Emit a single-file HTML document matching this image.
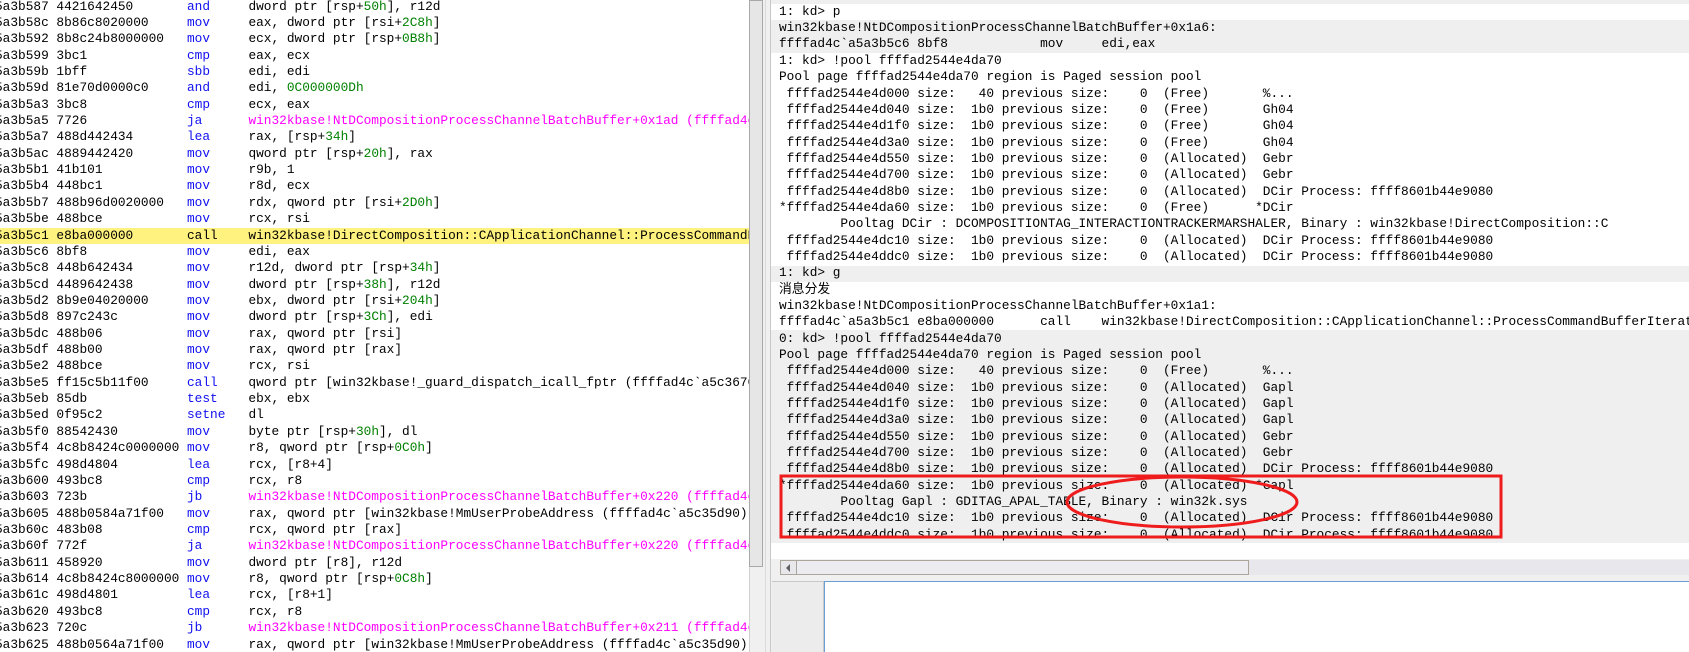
<!DOCTYPE html>
<html><head><meta charset="utf-8"><style>
*{margin:0;padding:0}
body{width:1689px;height:652px;overflow:hidden;background:#f0f0f0;position:relative;font-family:"Liberation Mono","Noto Sans CJK SC",monospace;font-size:12.8px;color:#000}
pre{font-family:"Liberation Mono","Noto Sans CJK SC",monospace;font-size:12.8px;position:absolute;white-space:pre}
#left{position:absolute;left:0;top:0;width:749px;height:652px;background:#fff;overflow:hidden}
#left pre{left:-5px;top:-1.5px;line-height:16.36px}
.b{color:#1010f0}.g{color:#008000}.m{color:#ff00ff}
#hl{position:absolute;left:0;top:228px;width:749px;height:16px;background:#fff27f}
#vs{position:absolute;left:749px;top:0;width:14px;height:652px;background:#f0f0f0;border-left:1px solid #d0d0d0}
#thumb{position:absolute;left:750px;top:0;width:12px;height:567px;background:#e6e6e6;border:1px solid #a8a8a8;box-sizing:border-box;width:14px;left:749px}
#right{position:absolute;left:771px;top:0;width:918px;height:543px;background:#fff;overflow:hidden}
#right pre{left:8px;top:3.8px;line-height:16.34px}
.gr{position:absolute;left:0;width:918px;background:#efefef}
</style></head><body>
<div id="left">
<div id="hl"></div>
<pre>5a3b587 4421642450       <span class="b">and</span>     dword ptr [rsp+<span class="g">50h</span>], r12d
5a3b58c 8b86c8020000     <span class="b">mov</span>     eax, dword ptr [rsi+<span class="g">2C8h</span>]
5a3b592 8b8c24b8000000   <span class="b">mov</span>     ecx, dword ptr [rsp+<span class="g">0B8h</span>]
5a3b599 3bc1             <span class="b">cmp</span>     eax, ecx
5a3b59b 1bff             <span class="b">sbb</span>     edi, edi
5a3b59d 81e70d0000c0     <span class="b">and</span>     edi, <span class="g">0C000000Dh</span>
5a3b5a3 3bc8             <span class="b">cmp</span>     ecx, eax
5a3b5a5 7726             <span class="b">ja</span>      <span class="m">win32kbase!NtDCompositionProcessChannelBatchBuffer+0x1ad (ffffad4c`a5a3b5ad)</span>
5a3b5a7 488d442434       <span class="b">lea</span>     rax, [rsp+<span class="g">34h</span>]
5a3b5ac 4889442420       <span class="b">mov</span>     qword ptr [rsp+<span class="g">20h</span>], rax
5a3b5b1 41b101           <span class="b">mov</span>     r9b, 1
5a3b5b4 448bc1           <span class="b">mov</span>     r8d, ecx
5a3b5b7 488b96d0020000   <span class="b">mov</span>     rdx, qword ptr [rsi+<span class="g">2D0h</span>]
5a3b5be 488bce           <span class="b">mov</span>     rcx, rsi
5a3b5c1 e8ba000000       call    win32kbase!DirectComposition::CApplicationChannel::ProcessCommandBufferIterator
5a3b5c6 8bf8             <span class="b">mov</span>     edi, eax
5a3b5c8 448b642434       <span class="b">mov</span>     r12d, dword ptr [rsp+<span class="g">34h</span>]
5a3b5cd 4489642438       <span class="b">mov</span>     dword ptr [rsp+<span class="g">38h</span>], r12d
5a3b5d2 8b9e04020000     <span class="b">mov</span>     ebx, dword ptr [rsi+<span class="g">204h</span>]
5a3b5d8 897c243c         <span class="b">mov</span>     dword ptr [rsp+<span class="g">3Ch</span>], edi
5a3b5dc 488b06           <span class="b">mov</span>     rax, qword ptr [rsi]
5a3b5df 488b00           <span class="b">mov</span>     rax, qword ptr [rax]
5a3b5e2 488bce           <span class="b">mov</span>     rcx, rsi
5a3b5e5 ff15c5b11f00     <span class="b">call</span>    qword ptr [win32kbase!_guard_dispatch_icall_fptr (ffffad4c`a5c36708)]
5a3b5eb 85db             <span class="b">test</span>    ebx, ebx
5a3b5ed 0f95c2           <span class="b">setne</span>   dl
5a3b5f0 88542430         <span class="b">mov</span>     byte ptr [rsp+<span class="g">30h</span>], dl
5a3b5f4 4c8b8424c0000000 <span class="b">mov</span>     r8, qword ptr [rsp+<span class="g">0C0h</span>]
5a3b5fc 498d4804         <span class="b">lea</span>     rcx, [r8+4]
5a3b600 493bc8           <span class="b">cmp</span>     rcx, r8
5a3b603 723b             <span class="b">jb</span>      <span class="m">win32kbase!NtDCompositionProcessChannelBatchBuffer+0x220 (ffffad4c`a5a3b640)</span>
5a3b605 488b0584a71f00   <span class="b">mov</span>     rax, qword ptr [win32kbase!MmUserProbeAddress (ffffad4c`a5c35d90)]
5a3b60c 483b08           <span class="b">cmp</span>     rcx, qword ptr [rax]
5a3b60f 772f             <span class="b">ja</span>      <span class="m">win32kbase!NtDCompositionProcessChannelBatchBuffer+0x220 (ffffad4c`a5a3b640)</span>
5a3b611 458920           <span class="b">mov</span>     dword ptr [r8], r12d
5a3b614 4c8b8424c8000000 <span class="b">mov</span>     r8, qword ptr [rsp+<span class="g">0C8h</span>]
5a3b61c 498d4801         <span class="b">lea</span>     rcx, [r8+1]
5a3b620 493bc8           <span class="b">cmp</span>     rcx, r8
5a3b623 720c             <span class="b">jb</span>      <span class="m">win32kbase!NtDCompositionProcessChannelBatchBuffer+0x211 (ffffad4c`a5a3b631)</span>
5a3b625 488b0564a71f00   <span class="b">mov</span>     rax, qword ptr [win32kbase!MmUserProbeAddress (ffffad4c`a5c35d90)]</pre>
</div>
<div id="vs"></div>
<div id="thumb"></div>
<div style="position:absolute;left:765px;top:0;width:1px;height:652px;background:#dadada"></div>
<div style="position:absolute;left:770px;top:0;width:1px;height:652px;background:#c8c8c8"></div>
<div id="right">
<div class="gr" style="top:0;height:4px"></div>
<div class="gr" style="top:20px;height:33px"></div>
<div class="gr" style="top:265.5px;height:16.5px"></div>
<div class="gr" style="top:330px;height:213px"></div>
<pre>1: kd&gt; p
win32kbase!NtDCompositionProcessChannelBatchBuffer+0x1a6:
ffffad4c`a5a3b5c6 8bf8            mov     edi,eax
1: kd&gt; !pool ffffad2544e4da70
Pool page ffffad2544e4da70 region is Paged session pool
 ffffad2544e4d000 size:   40 previous size:    0  (Free)       %...
 ffffad2544e4d040 size:  1b0 previous size:    0  (Free)       Gh04
 ffffad2544e4d1f0 size:  1b0 previous size:    0  (Free)       Gh04
 ffffad2544e4d3a0 size:  1b0 previous size:    0  (Free)       Gh04
 ffffad2544e4d550 size:  1b0 previous size:    0  (Allocated)  Gebr
 ffffad2544e4d700 size:  1b0 previous size:    0  (Allocated)  Gebr
 ffffad2544e4d8b0 size:  1b0 previous size:    0  (Allocated)  DCir Process: ffff8601b44e9080
*ffffad2544e4da60 size:  1b0 previous size:    0  (Free)      *DCir
        Pooltag DCir : DCOMPOSITIONTAG_INTERACTIONTRACKERMARSHALER, Binary : win32kbase!DirectComposition::C
 ffffad2544e4dc10 size:  1b0 previous size:    0  (Allocated)  DCir Process: ffff8601b44e9080
 ffffad2544e4ddc0 size:  1b0 previous size:    0  (Allocated)  DCir Process: ffff8601b44e9080
1: kd&gt; g
消息分发
win32kbase!NtDCompositionProcessChannelBatchBuffer+0x1a1:
ffffad4c`a5a3b5c1 e8ba000000      call    win32kbase!DirectComposition::CApplicationChannel::ProcessCommandBufferIterator
0: kd&gt; !pool ffffad2544e4da70
Pool page ffffad2544e4da70 region is Paged session pool
 ffffad2544e4d000 size:   40 previous size:    0  (Free)       %...
 ffffad2544e4d040 size:  1b0 previous size:    0  (Allocated)  Gapl
 ffffad2544e4d1f0 size:  1b0 previous size:    0  (Allocated)  Gapl
 ffffad2544e4d3a0 size:  1b0 previous size:    0  (Allocated)  Gapl
 ffffad2544e4d550 size:  1b0 previous size:    0  (Allocated)  Gebr
 ffffad2544e4d700 size:  1b0 previous size:    0  (Allocated)  Gebr
 ffffad2544e4d8b0 size:  1b0 previous size:    0  (Allocated)  DCir Process: ffff8601b44e9080
*ffffad2544e4da60 size:  1b0 previous size:    0  (Allocated) *Gapl
        Pooltag Gapl : GDITAG_APAL_TABLE, Binary : win32k.sys
 ffffad2544e4dc10 size:  1b0 previous size:    0  (Allocated)  DCir Process: ffff8601b44e9080
 ffffad2544e4ddc0 size:  1b0 previous size:    0  (Allocated)  DCir Process: ffff8601b44e9080</pre>
</div>
<div style="position:absolute;left:771px;top:543px;width:918px;height:16px;background:#fff"></div>
<div style="position:absolute;left:780px;top:560px;width:909px;height:15px;background:#e8e8ec"></div>
<div style="position:absolute;left:780px;top:560px;width:469px;height:15px;border:1px solid #aaa69c;box-sizing:border-box;background:#ececf0"></div>
<div style="position:absolute;left:780px;top:560px;width:17px;height:15px;border:1px solid #aaa69c;box-sizing:border-box;background:#e8e8ec"></div>
<div style="position:absolute;left:786px;top:564px;width:0;height:0;border-top:4px solid transparent;border-bottom:4px solid transparent;border-right:4px solid #606060"></div>
<div style="position:absolute;left:772px;top:581px;width:52px;height:71px;background:#ececec;border-top:1px solid #c8c8c8;border-right:1px solid #c8c8c8;box-sizing:border-box"></div>
<div style="position:absolute;left:824px;top:581px;width:865px;height:71px;background:#fff;border-top:1px solid #6a9fd6;border-left:1px solid #6a9fd6;box-sizing:border-box"></div>
<svg style="position:absolute;left:0;top:0" width="1689" height="652">
<rect x="781" y="476" width="720" height="61" fill="none" stroke="#ee1c1c" stroke-width="3"/>
<ellipse cx="1182" cy="502" rx="115" ry="25" fill="none" stroke="#ee1c1c" stroke-width="3"/>
</svg>
</body></html>
